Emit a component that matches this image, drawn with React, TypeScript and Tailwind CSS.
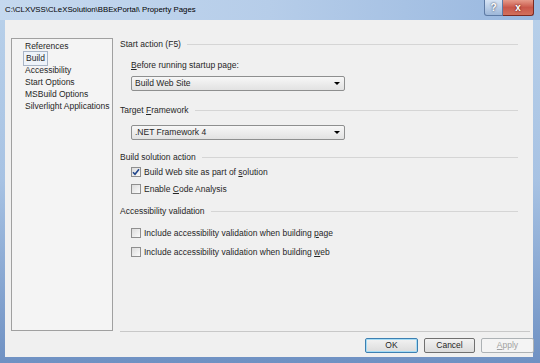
import React from 'react';

const font = { fontFamily: '"Liberation Sans", Arial, sans-serif' };

function GroupHeader({ label, className = '' }: { label: React.ReactNode; className?: string }) {
  return (
    <div className={`flex h-[12px] items-center ${className}`}>
      <span className="whitespace-nowrap">{label}</span>
      <div className="ml-[6px] h-px flex-1 bg-[#d5d5d5]" />
    </div>
  );
}

function Select({ value, className = '' }: { value: string; className?: string }) {
  return (
    <div
      className={`ml-[11px] flex h-[15px] w-[214px] items-center justify-between rounded-[2px] border border-[#8e8f8f] bg-gradient-to-b from-[#f7f7f7] to-[#e2e2e2] pl-[3px] pr-[4px] ${className}`}
    >
      <span>{value}</span>
      <span className="h-0 w-0 border-x-[3px] border-t-[3px] border-x-transparent border-t-black" />
    </div>
  );
}

function Check({ label, checked, className = '' }: { label: React.ReactNode; checked?: boolean; className?: string }) {
  return (
    <div className={`ml-[11px] flex h-[12px] items-center gap-[3px] ${className}`}>
      <span className="flex h-[10px] w-[10px] items-center justify-center border border-[#8f8f8f] bg-gradient-to-br from-[#dcdcdc] to-[#fbfbfb]">
        {checked && (
          <svg width="8" height="8" viewBox="0 0 8 8">
            <path d="M1 4.2 L3 6.3 L7 1.3" fill="none" stroke="#21468c" strokeWidth="1.6" />
          </svg>
        )}
      </span>
      <span>{label}</span>
    </div>
  );
}

export default function App() {
  const pages = ['References', 'Build', 'Accessibility', 'Start Options', 'MSBuild Options', 'Silverlight Applications'];

  return (
    <div
      className="flex h-[363px] w-[540px] flex-col bg-gradient-to-b from-[#b9d1ea] via-[#a7c2e3] to-[#6f91c3] text-[8.5px] text-[#262626]"
      style={font}
    >
      {/* Title bar */}
      <div className="flex h-[20px] items-start justify-between bg-gradient-to-r from-[#c5d9ef] via-[#b6cde9] to-[#98b7df]">
        <span className="mt-[4px] ml-[5px] text-[7.8px] text-black">C:\CLXVSS\CLeXSolution\BBExPortal\ Property Pages</span>
        <div className="mr-[6px] flex h-[16px]">
          <div className="flex w-[19px] items-center justify-center rounded-bl-[3px] border border-t-0 border-[#5d7aa4] bg-gradient-to-b from-[#d7e4f4] to-[#9db7d9] text-[10px] font-bold text-white [text-shadow:0_0_2px_#223]">
            ?
          </div>
          <div className="flex w-[31px] items-center justify-center rounded-br-[3px] border border-l-0 border-t-0 border-[#7a2a22] bg-gradient-to-b from-[#e59a8a] via-[#c9574a] to-[#d2705c] text-[10px] font-bold text-white [text-shadow:0_0_2px_#400]">
            x
          </div>
        </div>
      </div>

      {/* Client area */}
      <div className="mx-[5px] mb-[6px] mr-[7px] flex flex-1 flex-col bg-[#f0f0f0]">
        <div className="flex flex-1">
          {/* Page list */}
          <div className="mt-[18px] ml-[6px] h-[293px] w-[102px] border border-[#a0a0a0] bg-[#f4f4f4] pt-[1px]">
            {pages.map((p) => (
              <div key={p} className="flex h-[12px] items-center">
                <span
                  className={`ml-[11px] px-[2px] leading-[11px] whitespace-nowrap ${
                    p === 'Build' ? 'border border-[#a9b5c6] bg-[#eef3f9] px-[1px] py-[1px]' : ''
                  }`}
                >
                  {p}
                </span>
              </div>
            ))}
          </div>

          {/* Property panel */}
          <div className="ml-[7px] mr-[3px] flex flex-1 flex-col">
            <div className="mr-[12px] flex flex-1 flex-col">
              <GroupHeader label="Start action (F5)" className="mt-[18px]" />
              <div className="mt-[9px] ml-[11px] flex h-[12px] items-center">
                <span>
                  <u>B</u>efore running startup page:
                </span>
              </div>
              <Select value="Build Web Site" className="mt-[5px]" />
              <GroupHeader
                label={
                  <>
                    Target <u>F</u>ramework
                  </>
                }
                className="mt-[13px]"
              />
              <Select value=".NET Framework 4" className="mt-[9px]" />
              <GroupHeader label="Build solution action" className="mt-[11px]" />
              <Check
                checked
                className="mt-[3px]"
                label={
                  <>
                    Build Web site as part of <u>s</u>olution
                  </>
                }
              />
              <Check
                className="mt-[5px]"
                label={
                  <>
                    Enable <u>C</u>ode Analysis
                  </>
                }
              />
              <GroupHeader label="Accessibility validation" className="mt-[10px]" />
              <Check
                className="mt-[10px]"
                label={
                  <>
                    Include accessibility validation when building <u>p</u>age
                  </>
                }
              />
              <Check
                className="mt-[7px]"
                label={
                  <>
                    Include accessibility validation when building <u>w</u>eb
                  </>
                }
              />
            </div>
            <div className="h-px bg-[#c8c8c8]" />
          </div>
        </div>

        {/* Buttons */}
        <div className="mt-[6px] mb-[4px] mr-[-2px] flex justify-end gap-[6px]">
          <button className="h-[15px] w-[53px] rounded-[2px] border border-[#3c7fb1] bg-gradient-to-b from-[#f2f2f2] to-[#dcdcdc] text-[8.5px] leading-none shadow-[inset_0_0_0_1px_#a6dcf5]">
            OK
          </button>
          <button className="h-[15px] w-[51px] rounded-[2px] border border-[#707070] bg-gradient-to-b from-[#f2f2f2] to-[#dcdcdc] text-[8.5px] leading-none">
            Cancel
          </button>
          <button className="mr-[1px] h-[15px] w-[53px] rounded-[2px] border border-[#adb2b5] bg-[#f4f4f4] text-[8.5px] leading-none text-[#a0a0a0]">
            <u>A</u>pply
          </button>
        </div>
      </div>
    </div>
  );
}
